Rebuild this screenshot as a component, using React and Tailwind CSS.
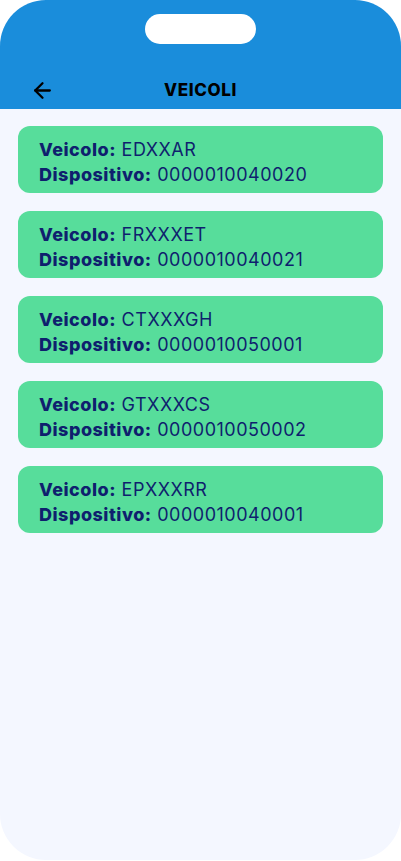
import { ArrowLeft } from "lucide-react";

const vehicles = [
  { plate: "EDXXAR", device: "0000010040020" },
  { plate: "FRXXXET", device: "0000010040021" },
  { plate: "CTXXXGH", device: "0000010050001" },
  { plate: "GTXXXCS", device: "0000010050002" },
  { plate: "EPXXXRR", device: "0000010040001" },
];

function VehicleCard({ plate, device }) {
  return (
    <div className="h-[67px] rounded-[12px] bg-[#57dd9b] px-[21px] pt-[11px] text-[18px] leading-[25px] tracking-[0.5px] text-[#0f1f6e]">
      <p>
        <span className="font-extrabold">Veicolo:</span> {plate}
      </p>
      <p>
        <span className="font-extrabold">Dispositivo:</span> {device}
      </p>
    </div>
  );
}

export default function App() {
  return (
    <div
      className="min-h-[861px] w-[401px] bg-white"
      style={{ fontFamily: "Inter, 'Noto Sans', sans-serif" }}
    >
      <div className="flex h-[860px] flex-col overflow-hidden rounded-[46px] bg-[#f4f7ff]">
        {/* header */}
        <div className="flex h-[109px] flex-col bg-[#1a8ddb]">
          <div className="flex justify-center pt-[14px]">
            <div className="h-[30px] w-[111px] rounded-full bg-white" />
          </div>
          <div className="relative mt-[34px] flex items-center justify-center">
            <ArrowLeft
              className="absolute left-[30px] h-[25px] w-[25px] text-black"
              strokeWidth={2.2}
            />
            <h1 className="text-[17px] font-extrabold tracking-[0.6px] text-black">
              VEICOLI
            </h1>
          </div>
        </div>

        {/* list */}
        <div className="flex flex-col gap-[18px] px-[18px] pt-[17px]">
          {vehicles.map((v) => (
            <VehicleCard key={v.plate} plate={v.plate} device={v.device} />
          ))}
        </div>
      </div>
    </div>
  );
}
